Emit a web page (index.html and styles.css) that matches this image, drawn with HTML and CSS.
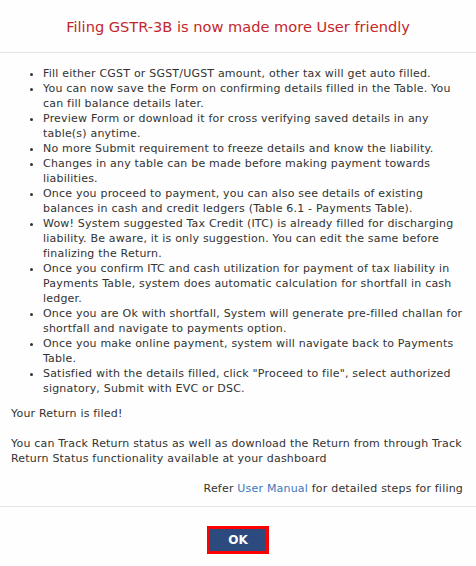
FILE: index.html
```html
<!DOCTYPE html>
<html>
<head>
<meta charset="utf-8">
<link rel="stylesheet" href="styles.css">
</head>
<body>
<div class="modal">
  <div class="modal-header">
    <h4 class="title">Filing GSTR-3B is now made more User friendly</h4>
  </div>
  <div class="modal-body">
    <ul class="list">
      <li>Fill either CGST or SGST/UGST amount, other tax will get auto filled.</li>
      <li>You can now save the Form on confirming details filled in the Table. You can fill balance details later.</li>
      <li>Preview Form or download it for cross verifying saved details in any table(s) anytime.</li>
      <li>No more Submit requirement to freeze details and know the liability.</li>
      <li>Changes in any table can be made before making payment towards liabilities.</li>
      <li>Once you proceed to payment, you can also see details of existing balances in cash and credit ledgers (Table 6.1 - Payments Table).</li>
      <li>Wow! System suggested Tax Credit (ITC) is already filled for discharging liability. Be aware, it is only suggestion. You can edit the same before finalizing the Return.</li>
      <li>Once you confirm ITC and cash utilization for payment of tax liability in Payments Table, system does automatic calculation for shortfall in cash ledger.</li>
      <li>Once you are Ok with shortfall, System will generate pre-filled challan for shortfall and navigate to payments option.</li>
      <li>Once you make online payment, system will navigate back to Payments Table.</li>
      <li>Satisfied with the details filled, click "Proceed to file", select authorized signatory, Submit with EVC or DSC.</li>
    </ul>
    <p class="para">Your Return is filed!</p>
    <p class="para">You can Track Return status as well as download the Return from through Track Return Status functionality available at your dashboard</p>
    <p class="refer">Refer <a class="link" href="#">User Manual</a> for detailed steps for filing</p>
  </div>
  <div class="modal-footer">
    <button class="btn-ok" type="button">OK</button>
  </div>
</div>
</body>
</html>
```
FILE: styles.css
```css
html, body {
  margin: 0;
  padding: 0;
  background: #fdfefd;
}
body {
  font-family: "DejaVu Sans", Verdana, sans-serif;
  font-size: 11px;
  letter-spacing: 0.2px;
  line-height: 15px;
  color: #333;
}
.modal {
  width: 476px;
}
.modal-header {
  height: 52px;
  border-bottom: 1px solid #e5e5e5;
  display: flex;
  align-items: center;
  justify-content: center;
}
.title {
  margin: 0;
  font-size: 14.6px;
  letter-spacing: 0;
  font-weight: normal;
  color: #c4262e;
}
.modal-body {
  padding: 13px 13px 10px 11px;
}
.list {
  margin: 0;
  padding-left: 32px;
}
.list li {
  margin: 0;
}
.para {
  margin: 0 0 15px 0;
}
.list + .para {
  margin-top: 10px;
}
.refer {
  margin: 0;
  text-align: right;
}
.link {
  color: #3c78c0;
  text-decoration: none;
}
.modal-footer {
  border-top: 1px solid #e5e5e5;
  display: flex;
  justify-content: center;
  padding: 19px 0 14px;
}
.btn-ok {
  width: 62px;
  height: 28px;
  border: 3px solid #ff0000;
  background: #2c4a7e;
  color: #fff;
  font-family: "DejaVu Sans", Verdana, sans-serif;
  font-size: 12px;
  font-weight: bold;
  padding: 0;
}
```
